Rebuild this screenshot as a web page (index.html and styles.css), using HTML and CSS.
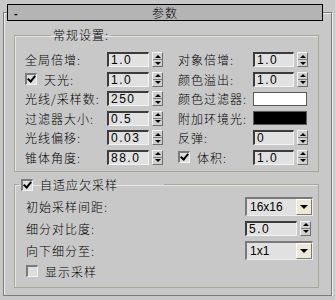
FILE: index.html
```html
<!DOCTYPE html>
<html lang="zh-CN">
<head>
    <meta charset="UTF-8">
    <title>参数</title>
    <link rel="stylesheet" href="styles.css">
</head>
<body>
    <div class="panel">
        <div class="title">
            <span class="collapse">-</span>
            <span class="title-text">参数</span>
        </div>

        <fieldset class="group general">
            <legend>常规设置:</legend>
            <div class="cols">
                <div class="col col-left">
                    <span class="lbl">全局倍增:</span>
                    <div class="field"><span class="num">1.0</span><span class="spin"><i class="up"></i><i class="down"></i></span></div>

                    <span class="lbl"><span class="check on"></span><span class="check-text">天光:</span></span>
                    <div class="field"><span class="num">1.0</span><span class="spin"><i class="up"></i><i class="down"></i></span></div>

                    <span class="lbl">光线/采样数:</span>
                    <div class="field"><span class="num">250</span><span class="spin"><i class="up"></i><i class="down"></i></span></div>

                    <span class="lbl">过滤器大小:</span>
                    <div class="field"><span class="num">0.5</span><span class="spin"><i class="up"></i><i class="down"></i></span></div>

                    <span class="lbl">光线偏移:</span>
                    <div class="field"><span class="num">0.03</span><span class="spin"><i class="up"></i><i class="down"></i></span></div>

                    <span class="lbl">锥体角度:</span>
                    <div class="field"><span class="num">88.0</span><span class="spin"><i class="up"></i><i class="down"></i></span></div>
                </div>

                <div class="col col-right">
                    <span class="lbl">对象倍增:</span>
                    <div class="field"><span class="num">1.0</span><span class="spin"><i class="up"></i><i class="down"></i></span></div>

                    <span class="lbl">颜色溢出:</span>
                    <div class="field"><span class="num">1.0</span><span class="spin"><i class="up"></i><i class="down"></i></span></div>

                    <span class="lbl">颜色过滤器:</span>
                    <div class="swatch white"></div>

                    <span class="lbl">附加环境光:</span>
                    <div class="swatch black"></div>

                    <span class="lbl">反弹:</span>
                    <div class="field"><span class="num">0</span><span class="spin"><i class="up"></i><i class="down"></i></span></div>

                    <span class="lbl"><span class="check on"></span><span class="check-text">体积:</span></span>
                    <div class="field"><span class="num">1.0</span><span class="spin"><i class="up"></i><i class="down"></i></span></div>
                </div>
            </div>
        </fieldset>

        <fieldset class="group adaptive">
            <legend><span class="check on"></span><span class="check-text">自适应欠采样</span></legend>
            <div class="rows">
                <div class="row row-drop">
                    <span class="lbl">初始采样间距:</span>
                    <div class="select"><span class="select-text">16x16</span><span class="arrow"></span></div>
                </div>
                <div class="row row-num">
                    <span class="lbl">细分对比度:</span>
                    <div class="field wide"><span class="num">5.0</span><span class="spin"><i class="up"></i><i class="down"></i></span></div>
                </div>
                <div class="row row-drop">
                    <span class="lbl">向下细分至:</span>
                    <div class="select"><span class="select-text">1x1</span><span class="arrow"></span></div>
                </div>
                <div class="row row-check">
                    <span class="check"></span><span class="check-text">显示采样</span>
                </div>
            </div>
        </fieldset>
    </div>
</body>
</html>
```

FILE: styles.css
```css
body {
    margin: 0;
    background-color: #c8c8c8;
    font-family: "Noto Sans CJK SC", "DejaVu Sans", sans-serif;
    font-weight: 300;
    font-size: 12px;
    color: #000;
}

.panel {
    margin: 12px 3px 0 3px;
    height: 284px;
    box-sizing: border-box;
    border: 1px solid #7c7c7c;
    box-shadow: inset 1px 1px 0 #ececec, 1px 1px 0 #efefef;
}

/* rollout title bar */
.title {
    margin: -9px 8px 0 3px;
    height: 17px;
    box-sizing: border-box;
    border: 1px solid #000;
    background-color: #b4b4b4;
    display: flex;
    align-items: center;
    position: relative;
}

.collapse {
    margin-left: 6px;
    font-family: "Liberation Sans", sans-serif;
    font-weight: bold;
    font-size: 11px;
}

.title-text {
    position: absolute;
    left: 0;
    right: 0;
    text-align: center;
    line-height: 15px;
    letter-spacing: 1px;
}

/* group boxes */
.group {
    margin: 7px 12px 0 10px;
    padding: 0;
    border: 1px solid #a8a898;
    box-shadow: inset 1px 1px 0 #e4e4e4;
}

.group legend {
    line-height: 14px;
    padding: 0 2px;
    letter-spacing: 1px;
}

.general legend {
    margin-left: 36px;
}

.adaptive {
    margin-top: 6px;
}

.adaptive legend {
    display: flex;
    align-items: center;
    margin-left: 4px;
    width: 145px;
    box-sizing: border-box;
}

.cols {
    display: flex;
    gap: 15px;
    padding: 10px 0 6px 10px;
}

.col {
    display: grid;
    grid-auto-rows: 15px;
    row-gap: 4.5px;
    align-items: center;
}

.col-left {
    grid-template-columns: 82px 56px;
}

.col-right {
    grid-template-columns: 75px 55px;
}

.lbl {
    display: flex;
    align-items: center;
    white-space: nowrap;
    letter-spacing: 1px;
}

/* numeric edit + spinner */
.field {
    display: flex;
    gap: 3px;
    height: 15px;
}

.num {
    flex: 1;
    box-sizing: border-box;
    height: 15px;
    background-color: #e1e1e1;
    border-top: 2px solid #3c3c3c;
    border-left: 2px solid #3c3c3c;
    border-right: 1px solid #f4f4f4;
    border-bottom: 1px solid #f4f4f4;
    font-family: "Liberation Sans", sans-serif;
    font-weight: normal;
    font-size: 12px;
    line-height: 12px;
    padding-left: 2px;
    letter-spacing: 1.5px;
}

.spin {
    width: 11px;
    flex: none;
    display: flex;
    flex-direction: column;
    box-sizing: border-box;
    border-top: 1px solid #f4f4f4;
    border-left: 1px solid #f4f4f4;
    border-right: 1px solid #6e6e6e;
    border-bottom: 1px solid #6e6e6e;
    background-color: #d0d0d0;
}

.spin i {
    flex: 1;
    display: flex;
    align-items: center;
    justify-content: center;
}

.spin .up {
    border-bottom: 1px solid #7c7c7c;
}

.spin .up::before {
    content: "";
    border-left: 3px solid transparent;
    border-right: 3px solid transparent;
    border-bottom: 3px solid #000;
}

.spin .down::before {
    content: "";
    border-left: 3px solid transparent;
    border-right: 3px solid transparent;
    border-top: 3px solid #000;
}

/* colour swatches */
.swatch {
    width: 54px;
    height: 14px;
    box-sizing: border-box;
    border: 1px solid #5a5a5a;
}

.swatch.white {
    background-color: #fff;
}

.swatch.black {
    background-color: #000;
}

/* checkboxes */
.check {
    width: 12px;
    height: 12px;
    flex: none;
    box-sizing: border-box;
    background-color: #dedede;
    border-top: 2px solid #7a7a7a;
    border-left: 2px solid #7a7a7a;
    border-right: 1px solid #f2f2f2;
    border-bottom: 1px solid #f2f2f2;
    position: relative;
}

.check.on::after {
    content: "";
    position: absolute;
    left: 2px;
    top: -1px;
    width: 3px;
    height: 6px;
    border-right: 2px solid #000;
    border-bottom: 2px solid #000;
    transform: rotate(40deg);
}

.check-text {
    margin-left: 7px;
    letter-spacing: 1px;
}

/* adaptive sampling rows */
.rows {
    display: flex;
    flex-direction: column;
    gap: 5px;
    padding: 5px 5px 9px 11px;
}

.row {
    display: flex;
    align-items: center;
    justify-content: space-between;
}

.row-drop {
    height: 19px;
}

.row-num {
    height: 15px;
}

.row-check {
    height: 13px;
    justify-content: flex-start;
}

.field.wide {
    width: 66px;
    margin-right: 2px;
}

.select {
    width: 68px;
    height: 19px;
    box-sizing: border-box;
    display: flex;
    align-items: stretch;
    background-color: #e1e1e1;
    border-top: 2px solid #7a7a7a;
    border-left: 2px solid #7a7a7a;
    border-right: 1px solid #ececec;
    border-bottom: 1px solid #ececec;
}

.select-text {
    flex: 1;
    display: flex;
    align-items: center;
    padding-left: 3px;
    font-family: "Liberation Sans", sans-serif;
    font-weight: normal;
    font-size: 12px;
}

.arrow {
    width: 16px;
    box-sizing: border-box;
    background-color: #ece9d8;
    border-top: 1px solid #fff;
    border-left: 1px solid #fff;
    border-right: 1px solid #7a7a7a;
    border-bottom: 1px solid #7a7a7a;
    display: flex;
    align-items: center;
    justify-content: center;
}

.arrow::before {
    content: "";
    border-left: 4px solid transparent;
    border-right: 4px solid transparent;
    border-top: 4px solid #000;
}
```
